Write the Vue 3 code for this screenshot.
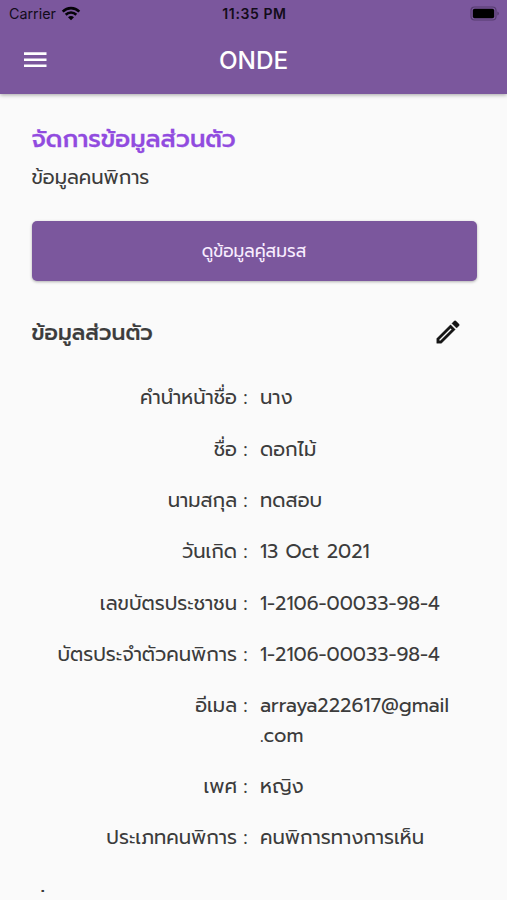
<script setup>
const rows = [
  { label: 'คำนำหน้าชื่อ', value: 'นาง' },
  { label: 'ชื่อ', value: 'ดอกไม้' },
  { label: 'นามสกุล', value: 'ทดสอบ' },
  { label: 'วันเกิด', value: '13 Oct 2021' },
  { label: 'เลขบัตรประชาชน', value: '1-2106-00033-98-4' },
  { label: 'บัตรประจำตัวคนพิการ', value: '1-2106-00033-98-4' },
  { label: 'อีเมล', value: 'arraya222617@gmail.com' },
  { label: 'เพศ', value: 'หญิง' },
  { label: 'ประเภทคนพิการ', value: 'คนพิการทางการเห็น' },
]
</script>

<template>
  <div class="screen">
    <header class="header">
      <div class="status">
        <div class="carrier">
          <span class="carrier-name">Carrier</span>
          <svg class="wifi" width="20" height="15" viewBox="0 0 20 15">
            <path d="M1.7 5.6C6.4 1 13.6 1 18.3 5.6M4.7 8.7c3-2.9 7.6-2.9 10.6 0" fill="none" stroke="#050308" stroke-width="2.6" />
            <path d="M10 14.2 7 11.2c1.7-1.6 4.3-1.6 6 0Z" fill="#050308" />
          </svg>
        </div>
        <span class="time">11:35 PM</span>
        <svg class="battery" width="30" height="15" viewBox="0 0 30 15">
          <rect x="1" y="1" width="25" height="13" rx="3.5" fill="none" stroke="#573c70" stroke-width="1.2" />
          <rect x="2.8" y="2.8" width="21.4" height="9.4" rx="1.8" fill="#000" />
          <path d="M27.3 5.4q1.6.6 1.6 2.1t-1.6 2.1Z" fill="#573c70" />
        </svg>
      </div>
      <div class="bar">
        <svg class="menu" width="24" height="18" viewBox="0 0 24 18">
          <path d="M0 2.6h22.5M0 8.8h22.5M0 14.8h22.5" stroke="#fff" stroke-width="2.6" />
        </svg>
        <h1 class="title">ONDE</h1>
      </div>
    </header>
    <main class="content">
      <h2 class="page-title">จัดการข้อมูลส่วนตัว</h2>
      <p class="subtitle">ข้อมูลคนพิการ</p>
      <button class="button">ดูข้อมูลคู่สมรส</button>
      <div class="section">
        <h3 class="section-title">ข้อมูลส่วนตัว</h3>
        <svg class="edit" width="30" height="30" viewBox="0 0 24 24">
          <path fill="#151515" stroke="#151515" stroke-width=".3" d="M3 17.25V21h3.75L17.81 9.94l-3.75-3.75L3 17.25zM5.92 19H5v-.92l9.06-9.06.92.92L5.92 19zM20.71 5.63l-2.34-2.34a1 1 0 0 0-1.41 0l-1.83 1.83 3.75 3.75 1.83-1.83a1 1 0 0 0 0-1.41z" />
        </svg>
      </div>
      <dl class="rows">
        <div v-for="row in rows" :key="row.label" class="row">
          <dt class="label">{{ row.label }}</dt>
          <span class="colon">:</span>
          <dd class="value">{{ row.value }}</dd>
        </div>
      </dl>
      <h3 class="next-title">ที่อยู่</h3>
    </main>
  </div>
</template>

<style>
body {
  margin: 0;
  background: #fafafa;
}
</style>

<style scoped>
* {
  box-sizing: border-box;
}
.screen {
  height: 900px;
  overflow: hidden;
  background: #fafafa;
  color: #3c3c3c;
  font-family: 'Prompt', 'Noto Sans Thai', 'Noto Sans', sans-serif;
}
.header {
  position: relative;
  height: 94px;
  background: #7b579d;
  box-shadow: 0 1px 4px rgba(0, 0, 0, 0.35);
}
.status {
  display: grid;
  grid-template-columns: 1fr auto 1fr;
  align-items: center;
  height: 27px;
  padding: 0 7px 0 9px;
  color: #130c1a;
  font: 14.3px/27px Inter, sans-serif;
}
.carrier {
  display: flex;
  align-items: center;
  gap: 5px;
}
.time {
  font-size: 14px;
  font-weight: 600;
  letter-spacing: 0.6px;
}
.battery {
  justify-self: end;
  margin-top: -1px;
}
.bar {
  display: grid;
  grid-template-columns: 1fr auto 1fr;
  align-items: center;
  height: 66px;
  padding: 0 24px;
}
.title {
  margin: 0;
  color: #fff;
  font: 500 24.3px/30px Inter, sans-serif;
}
.content {
  height: 798px;
  overflow: hidden;
  padding: 28px 30px 0 31.5px;
}
.page-title {
  margin: 0;
  height: 34px;
  color: #914bdf;
  font-size: 24.2px;
  font-weight: 500;
  line-height: 34px;
  -webkit-text-stroke: 0.3px #914bdf;
}
.subtitle {
  margin: 7px 0 0;
  height: 30px;
  font-size: 19.5px;
  line-height: 30px;
}
.button {
  display: block;
  width: 445px;
  height: 60px;
  margin: 28px 0 0;
  padding: 0;
  border: 0;
  border-radius: 5px;
  background: #7b579d;
  box-shadow: 0 1px 3px rgba(0, 0, 0, 0.3);
  color: #f8edff;
  font-family: inherit;
  font-size: 17.1px;
}
.section {
  display: flex;
  align-items: center;
  justify-content: space-between;
  height: 40px;
  margin-top: 31px;
  padding-right: 14px;
}
.section-title {
  margin: 0;
  font-size: 21.75px;
  font-weight: 500;
  -webkit-text-stroke: 0.2px #3c3c3c;
}
.rows {
  display: flex;
  flex-direction: column;
  gap: 22px;
  margin: 31.3px 0 0;
}
.row {
  display: grid;
  grid-template-columns: 205.5px 23px 192px;
  font-size: 19.56px;
  line-height: 29.35px;
}
.label {
  text-align: right;
  white-space: nowrap;
}
.colon {
  padding-left: 6.5px;
}
.value {
  margin: 0;
  overflow-wrap: anywhere;
}
.next-title {
  margin: 34px 0 0;
  font-size: 21.75px;
  font-weight: 500;
  line-height: 34px;
}
</style>
